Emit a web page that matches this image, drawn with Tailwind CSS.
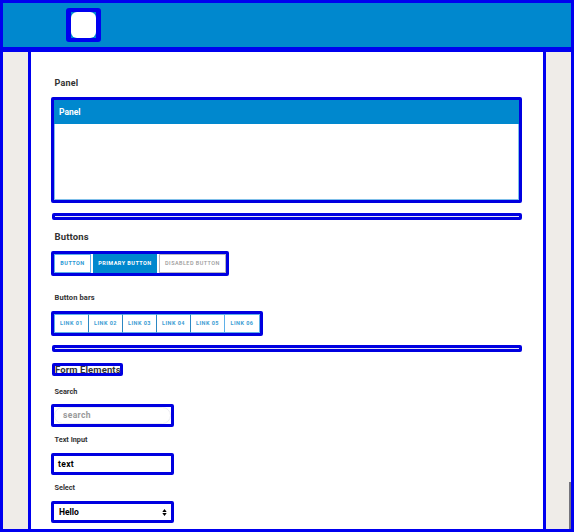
<!DOCTYPE html>
<html lang="en">
<head>
<meta charset="utf-8">
<title>Components</title>
<script src="https://cdn.jsdelivr.net/npm/@tailwindcss/browser@4"></script>
</head>
<body class="h-[532px] w-[574px] overflow-hidden bg-white font-[Roboto,'Liberation_Sans',sans-serif] font-bold text-[#333]">
<div class="relative flex h-[532px] flex-col border-[3px] border-[#0000f0] bg-[#efece8]">
  <header class="h-[44px] shrink-0 bg-[#0088ce] pl-[63px] pt-[5px]">
    <div class="h-[34px] w-[35px] rounded-[3px] border-x-5 border-y-4 border-[#0000f0] bg-[#0088ce]">
      <div class="h-full w-full rounded-[6px] bg-white"></div>
    </div>
  </header>
  <div class="h-[5px] shrink-0 bg-[#0000f0]"></div>
  <main class="mx-[25px] flex min-h-0 flex-1 flex-col items-start border-x-[3px] border-[#0000f0] bg-white pl-5">
    <h2 class="mt-[25px] ml-[3.5px] h-3 text-[9px] leading-3 tracking-[0.2px]">Panel</h2>
    <section class="mt-2 h-[106px] w-[471px] shrink-0 rounded-[2px] border-[3px] border-[#0000e0]">
      <div class="flex h-full flex-col border border-t-0 border-[#7fbfe9]">
        <h3 class="-mx-px h-[24px] bg-[#0088ce] pl-[5px] text-[8.5px] leading-[24px] text-white">Panel</h3>
      </div>
    </section>
    <div class="mt-[10px] ml-px h-[7px] w-[470px] shrink-0 rounded-[2px] border-[3px] border-[#0000e0] bg-[#e4e4f4]"></div>
    <h2 class="mt-[11px] ml-[3.5px] h-3 text-[9.5px] leading-3 tracking-[0.15px]">Buttons</h2>
    <div class="mt-2 flex h-[25px] w-[178px] shrink-0 gap-[2px] rounded-[2px] border-[3px] border-[#0000e0] text-[5.5px] tracking-[0.45px]">
      <button class="w-[37px] shrink-0 border border-[#5fb0e8] text-[#2b97d3]">BUTTON</button>
      <button class="w-[64px] shrink-0 border border-[#0088ce] bg-[#0088ce] whitespace-nowrap text-white">PRIMARY BUTTON</button>
      <button class="w-[67px] shrink-0 border border-[#b5b5c0] font-medium whitespace-nowrap text-[#999]">DISABLED BUTTON</button>
    </div>
    <h3 class="mt-4 ml-[3.5px] h-3 text-[7.5px] leading-3 tracking-[0.1px]">Button bars</h3>
    <div class="mt-[7px] flex h-[25px] w-[212px] shrink-0 rounded-[2px] border-[3px] border-[#0000e0] text-[5.5px] tracking-[0.45px] text-[#3c9dd3]">
      <button class="w-[35px] border border-[#5fb0e8] border-r-[#2b87c3]">LINK 01</button>
      <button class="w-[34px] border border-l-0 border-[#5fb0e8] border-r-[#2b87c3]">LINK 02</button>
      <button class="w-[34px] border border-l-0 border-[#5fb0e8] border-r-[#2b87c3]">LINK 03</button>
      <button class="w-[34px] border border-l-0 border-[#5fb0e8] border-r-[#2b87c3]">LINK 04</button>
      <button class="w-[34px] border border-l-0 border-[#5fb0e8]">LINK 05</button>
      <button class="w-[35px] border border-l-0 border-[#5fb0e8]">LINK 06</button>
    </div>
    <div class="mt-[9px] ml-px h-[7px] w-[470px] shrink-0 rounded-[2px] border-[3px] border-[#0000e0] bg-[#e4e4f4]"></div>
    <div class="mt-[11px] ml-px h-[13px] w-[71px] shrink-0 rounded-[2px] border-[3px] border-[#0000e0]">
      <h2 class="h-[7px] text-[9.5px] leading-[7px] tracking-[0.1px] whitespace-nowrap">Form Elements</h2>
    </div>
    <label class="mt-[10px] ml-[3.5px] h-3 text-[7.3px] leading-3">Search</label>
    <div class="mt-[6px] h-[23px] w-[123px] shrink-0 rounded-[2px] border-[3px] border-[#0000e0]">
      <div class="flex h-full items-center rounded-full border border-[#ececf2] pl-2 text-[8.5px] tracking-[0.35px] text-[#999]">search</div>
    </div>
    <label class="mt-[7px] ml-[3.5px] h-3 text-[7.3px] leading-3">Text Input</label>
    <div class="mt-[7px] flex h-[22px] w-[123px] shrink-0 items-center rounded-[2px] border-[3px] border-[#0000e0] pl-1 text-[8.5px] tracking-[0.35px] text-black">text</div>
    <label class="mt-[7px] ml-[3.5px] h-3 text-[7.3px] leading-3">Select</label>
    <div class="mt-[7px] flex h-[22px] w-[123px] shrink-0 items-center justify-between rounded-[2px] border-[3px] border-[#0000e0] pr-1 pl-[5px] text-[8.5px] text-black">
      <span>Hello</span>
      <svg class="h-[7px] w-[5px]" viewBox="0 0 5 7"><path d="M.3 3 2.5 0 4.7 3ZM.3 4 2.5 7 4.7 4Z"/></svg>
    </div>
  </main>
  <div class="absolute right-0 bottom-0 h-[47px] w-[2px] bg-[#74747c]"></div>
</div>
</body>
</html>
